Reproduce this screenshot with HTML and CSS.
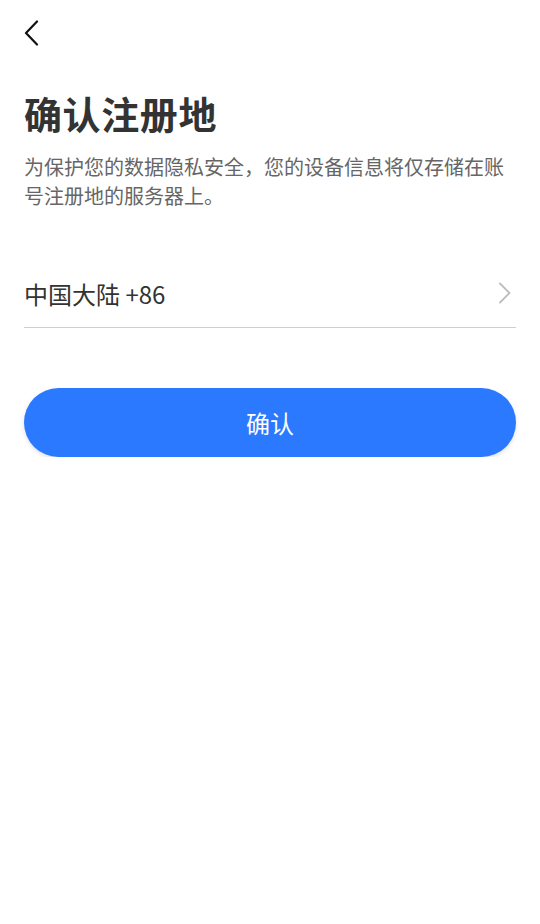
FILE: index.html
```html
<!DOCTYPE html>
<html lang="zh-CN">
<head>
<meta charset="utf-8">
<link rel="stylesheet" href="styles.css">
</head>
<body>
<div class="page">
  <header class="topbar">
    <svg class="back" width="16" height="26" viewBox="0 0 16 26"><path d="M13 1.5 L2 13 L13 24.5" fill="none" stroke="#111" stroke-width="2.2" stroke-linecap="round" stroke-linejoin="round"/></svg>
  </header>
  <h1 class="title">确认注册地</h1>
  <p class="desc">为保护您的数据隐私安全，您的设备信息将仅存储在账号注册地的服务器上。</p>
  <div class="region-row">
    <span class="region">中国大陆 +86</span>
    <svg class="chev" width="14" height="22" viewBox="0 0 14 22"><path d="M2 1.5 L11.5 11 L2 20.5" fill="none" stroke="#bdbdbd" stroke-width="1.8" stroke-linecap="round" stroke-linejoin="round"/></svg>
  </div>
  <button class="confirm">确认</button>
</div>
</body>
</html>
```
FILE: styles.css
```css
html, body {
  margin: 0;
  padding: 0;
  background: #fff;
}
body {
  font-family: "Noto Sans CJK SC", "Noto Sans", sans-serif;
  color: #333;
}
.page {
  padding: 0 24px;
  display: flex;
  flex-direction: column;
}
.topbar {
  height: 64px;
  display: flex;
  align-items: flex-start;
  padding-top: 20px;
  box-sizing: border-box;
}
.back {
  display: block;
}
.title {
  margin: 24px 0 0;
  font-size: 38px;
  font-weight: 700;
  line-height: 50px;
  color: #333;
  letter-spacing: 0.6px;
}
.desc {
  margin: 14px 0 0;
  font-size: 20px;
  line-height: 29px;
  color: #666;
}
.region-row {
  margin-top: 57px;
  height: 61px;
  display: flex;
  align-items: center;
  justify-content: space-between;
  border-bottom: 1px solid #cfcfcf;
  padding-bottom: 8px;
  box-sizing: border-box;
}
.region {
  font-size: 24px;
  color: #333;
}
.chev {
  display: block;
  margin-right: 4px;
}
.confirm {
  margin-top: 60px;
  height: 69px;
  border: none;
  border-radius: 35px;
  background: #2b79ff;
  color: #fff;
  font-family: "Noto Sans CJK SC", sans-serif;
  font-size: 24px;
  box-shadow: 0 2px 4px rgba(0, 0, 0, 0.12);
}
```
